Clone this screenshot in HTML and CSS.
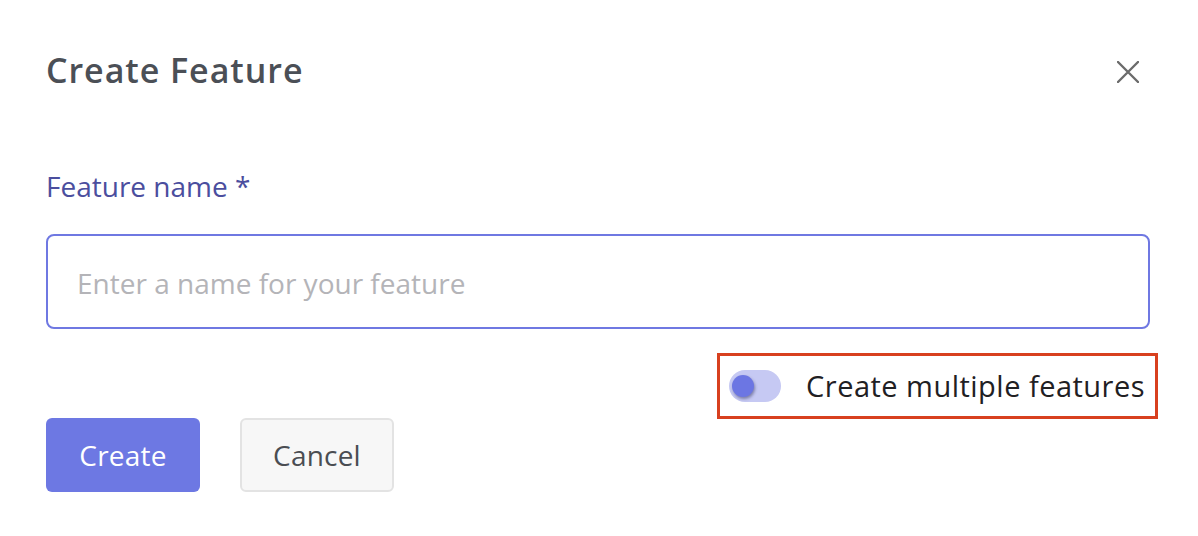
FILE: index.html
```html
<!DOCTYPE html>
<html lang="en">
<head>
<meta charset="utf-8">
<title>Create Feature</title>
<link rel="stylesheet" href="styles.css">
</head>
<body>
<div class="modal">
  <div class="header">
    <h1 class="title">Create Feature</h1>
    <button class="close" aria-label="Close">
      <svg width="22" height="22" viewBox="0 0 22 22"><path d="M1 1 L21 21 M21 1 L1 21" stroke="#6b6b6b" stroke-width="2.4" stroke-linecap="round" fill="none"/></svg>
    </button>
  </div>
  <label class="label" for="name">Feature name *</label>
  <input id="name" class="input" type="text" placeholder="Enter a name for your feature">
  <div class="toggle-row">
    <div class="annot">
      <span class="track"><span class="knob"></span></span>
      <span class="toggle-text">Create multiple features</span>
    </div>
  </div>
  <div class="actions">
    <button class="btn primary">Create</button>
    <button class="btn secondary">Cancel</button>
  </div>
</div>
</body>
</html>
```

FILE: styles.css
```css
html, body {
  margin: 0;
  padding: 0;
  background: #ffffff;
}
body {
  font-family: "Open Sans", "Noto Sans", sans-serif;
  width: 1198px;
  height: 536px;
  overflow: hidden;
}
.modal {
  padding: 50px 48px 0 46px;
  display: flex;
  flex-direction: column;
}
.header {
  display: flex;
  align-items: center;
  justify-content: space-between;
  height: 40px;
}
.title {
  margin: 0;
  font-size: 34px;
  line-height: 40px;
  font-weight: 600;
  color: #4b4f56;
  letter-spacing: 0.95px;
}
.close {
  border: 0;
  background: none;
  padding: 0;
  margin-right: 11px;
  margin-top: 3px;
  width: 22px;
  height: 22px;
  display: flex;
}
.label {
  margin-top: 79px;
  font-size: 28px;
  line-height: 34px;
  color: #4b4e9e;
}
.input {
  margin-top: 31px;
  box-sizing: border-box;
  width: 100%;
  height: 95px;
  border: 2px solid #6f78e2;
  border-radius: 8px;
  padding: 3px 29px 0 29px;
  font-family: "Open Sans", "Noto Sans", sans-serif;
  font-size: 28px;
  color: #333;
  outline: none;
}
.input::placeholder {
  color: #b4b4b8;
}
.toggle-row {
  display: flex;
  justify-content: flex-end;
  margin-top: 24px;
  margin-right: -8px;
}
.annot {
  display: flex;
  align-items: center;
  border: 3px solid #d8401f;
  height: 66px;
  box-sizing: border-box;
  padding: 0 10px 0 9px;
}
.track {
  position: relative;
  width: 52px;
  height: 32px;
  border-radius: 16px;
  background: #c6c9f3;
  display: inline-block;
}
.knob {
  position: absolute;
  left: 3px;
  top: 5px;
  width: 22px;
  height: 22px;
  border-radius: 50%;
  background: #6c76e3;
  box-shadow: 1px 2px 3px rgba(40, 40, 80, 0.45);
}
.toggle-text {
  margin-left: 25px;
  font-size: 29px;
  letter-spacing: 0.48px;
  color: #1f2023;
  line-height: 40px;
}
.actions {
  display: flex;
  gap: 40px;
  margin-top: -1px;
}
.btn {
  width: 154px;
  height: 74px;
  box-sizing: border-box;
  border-radius: 6px;
  font-family: "Open Sans", "Noto Sans", sans-serif;
  font-size: 28px;
  letter-spacing: 0.2px;
  padding: 0;
  cursor: pointer;
}
.primary {
  background: #6d78e3;
  border: 0;
  color: #ffffff;
}
.secondary {
  background: #f7f7f7;
  border: 2px solid #e3e3e3;
  color: #4a4d52;
}
```
